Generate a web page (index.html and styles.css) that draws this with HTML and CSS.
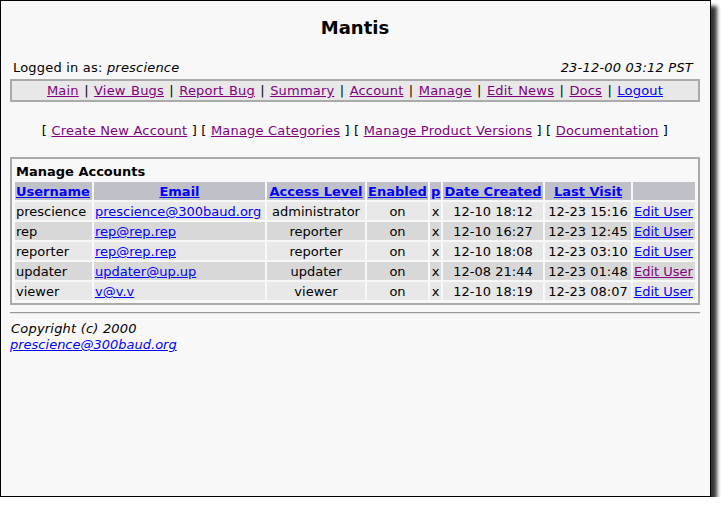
FILE: index.html
```html
<!DOCTYPE html>
<html>
<head>
<meta charset="utf-8">
<title>Mantis</title>
<link rel="stylesheet" href="styles.css">
</head>
<body>
<div class="window">
  <div class="title">Mantis</div>
  <div class="login-row">
    <span>Logged in as: <i>prescience</i></span>
    <i>23-12-00 03:12 PST</i>
  </div>
  <div class="nav">
    <a class="v" href="#">Main</a> | <a class="v" href="#">View Bugs</a> | <a class="v" href="#">Report Bug</a> | <a class="v" href="#">Summary</a> | <a class="v" href="#">Account</a> | <a class="v" href="#">Manage</a> | <a class="v" href="#">Edit News</a> | <a class="v" href="#">Docs</a> | <a href="#">Logout</a>
  </div>
  <div class="sublinks">
    [ <a class="v" href="#">Create New Account</a> ] [ <a class="v" href="#">Manage Categories</a> ] [ <a class="v" href="#">Manage Product Versions</a> ] [ <a class="v" href="#">Documentation</a> ]
  </div>
  <div class="panel">
    <table class="accounts">
      <colgroup>
        <col class="c1"><col class="c2"><col class="c3"><col class="c4"><col class="c5"><col class="c6"><col class="c7"><col class="c8">
      </colgroup>
      <tr><td class="caption" colspan="8">Manage Accounts</td></tr>
      <tr class="head">
        <th class="left"><a href="#">Username</a></th>
        <th><a href="#">Email</a></th>
        <th><a href="#">Access Level</a></th>
        <th><a href="#">Enabled</a></th>
        <th><a href="#">p</a></th>
        <th><a href="#">Date Created</a></th>
        <th><a href="#">Last Visit</a></th>
        <th></th>
      </tr>
      <tr class="odd">
        <td>prescience</td><td><a href="#">prescience@300baud.org</a></td><td class="c">administrator</td><td class="c">on</td><td class="c">x</td><td class="c">12-10 18:12</td><td class="c">12-23 15:16</td><td><a href="#">Edit User</a></td>
      </tr>
      <tr class="even">
        <td>rep</td><td><a href="#">rep@rep.rep</a></td><td class="c">reporter</td><td class="c">on</td><td class="c">x</td><td class="c">12-10 16:27</td><td class="c">12-23 12:45</td><td><a href="#">Edit User</a></td>
      </tr>
      <tr class="odd">
        <td>reporter</td><td><a href="#">rep@rep.rep</a></td><td class="c">reporter</td><td class="c">on</td><td class="c">x</td><td class="c">12-10 18:08</td><td class="c">12-23 03:10</td><td><a href="#">Edit User</a></td>
      </tr>
      <tr class="even">
        <td>updater</td><td><a href="#">updater@up.up</a></td><td class="c">updater</td><td class="c">on</td><td class="c">x</td><td class="c">12-08 21:44</td><td class="c">12-23 01:48</td><td><a class="v" href="#">Edit User</a></td>
      </tr>
      <tr class="odd">
        <td>viewer</td><td><a href="#">v@v.v</a></td><td class="c">viewer</td><td class="c">on</td><td class="c">x</td><td class="c">12-10 18:19</td><td class="c">12-23 08:07</td><td><a href="#">Edit User</a></td>
      </tr>
    </table>
  </div>
  <div class="rule"></div>
  <div class="footer">
    <i class="copy">Copyright (c) 2000</i><br>
    <a class="mail" href="#">prescience@300baud.org</a>
  </div>
</div>
</body>
</html>
```

FILE: styles.css
```css
html, body {
  margin: 0;
  padding: 0;
  background: #ffffff;
}

body {
  font-family: "DejaVu Sans", Verdana, sans-serif;
  font-size: 13px;
  line-height: 16px;
  color: #000000;
}

.window {
  box-sizing: border-box;
  width: 711px;
  height: 497px;
  border: 1px solid #000000;
  background: #f8f8f8;
  padding: 16px 10px 0 9px;
  box-shadow: 6px 6px 4px rgba(0, 0, 0, 0.8);
}

a {
  color: #0000ff;
  text-decoration: underline;
}

a.v {
  color: #800080;
}

.title {
  text-align: center;
  font-weight: bold;
  font-size: 18px;
  line-height: 22px;
}

.login-row {
  display: flex;
  justify-content: space-between;
  margin-top: 21px;
  padding: 0 7px 0 3px;
  letter-spacing: 0.2px;
}

.nav {
  margin-top: 3px;
  border: 2px solid #aaaaaa;
  background: #e8e8e8;
  text-align: center;
  line-height: 18px;
  padding-top: 1px;
  letter-spacing: 0.2px;
  word-spacing: 1px;
}

.sublinks {
  margin-top: 21px;
  text-align: center;
  letter-spacing: 0.2px;
}

.panel {
  margin-top: 18px;
  border: 2px solid #aaaaaa;
  padding: 1px;
}

.accounts {
  width: 100%;
  table-layout: fixed;
  border-collapse: separate;
  border-spacing: 2px;
}

.c1 { width: 77px; }
.c2 { width: 171px; }
.c3 { width: 98px; }
.c4 { width: 61px; }
.c5 { width: 11px; }
.c6 { width: 100px; }
.c7 { width: 86px; }
.c8 { width: 62px; }

.accounts td,
.accounts th {
  padding: 1px 1px 0 1px;
  height: 17px;
  line-height: 17px;
  white-space: nowrap;
  overflow: hidden;
}

.accounts th {
  text-align: center;
  font-weight: bold;
}

.accounts th.left {
  text-align: left;
}

.accounts td.caption {
  font-weight: bold;
  text-align: left;
}

.accounts td.c {
  text-align: center;
}

.head th {
  background: #c0c0c8;
}

.odd td {
  background: #e8e8e8;
}

.even td {
  background: #d8d8d8;
}

.rule {
  margin-top: 7px;
  border-top: 1px solid #999999;
  border-bottom: 1px solid #e0e0e0;
}

.footer {
  margin-top: 7px;
}

.footer .copy {
  padding-left: 1px;
  letter-spacing: 0.2px;
}

.footer .mail {
  font-style: italic;
}
```
